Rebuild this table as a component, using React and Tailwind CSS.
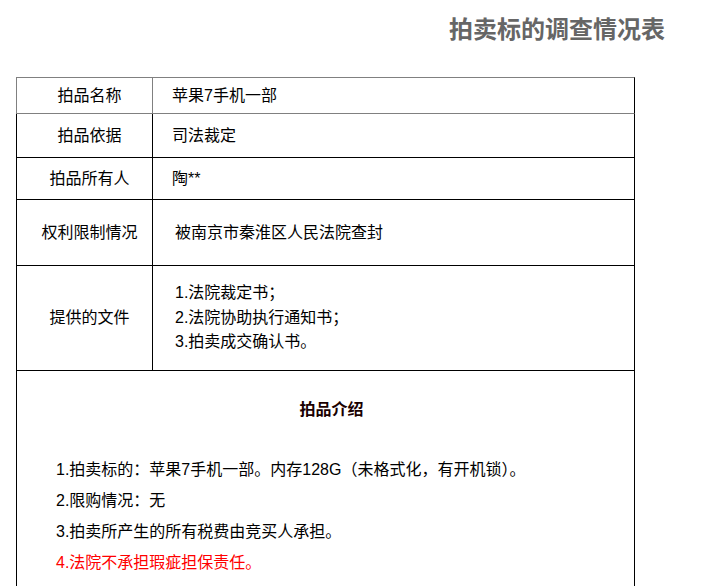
export default function App() {
  const font = { fontFamily: '"Liberation Sans", "Noto Sans CJK SC", sans-serif' };
  return (
    <div className="w-[722px] h-[586px] overflow-hidden bg-white text-black" style={font}>
      <div className="flex justify-end pr-[57px] pt-[14px] h-[77px]">
        <div className="text-[24px] leading-[32px] font-bold text-[#666666]">拍卖标的调查情况表</div>
      </div>
      <div className="ml-[16px] w-[619px] text-[16px]">
        <div className="flex h-[37px] border-t border-l border-b border-r border-[#808080] border-r-black">
          <div className="w-[136px] shrink-0 border-r border-[#808080] flex items-center justify-center pl-[10px]">拍品名称</div>
          <div className="flex items-center pl-[19px]">苹果7手机一部</div>
        </div>
        <div className="flex h-[44px] border-l border-r border-b border-black">
          <div className="w-[136px] shrink-0 border-r border-black flex items-center justify-center pl-[10px]">拍品依据</div>
          <div className="flex items-center pl-[19px]">司法裁定</div>
        </div>
        <div className="flex h-[42px] border-l border-r border-b border-black">
          <div className="w-[136px] shrink-0 border-r border-black flex items-center justify-center pl-[10px]">拍品所有人</div>
          <div className="flex items-center pl-[19px]">陶**</div>
        </div>
        <div className="flex h-[66px] border-l border-r border-b border-black">
          <div className="w-[136px] shrink-0 border-r border-black flex items-center justify-center pl-[10px]">权利限制情况</div>
          <div className="flex items-center pl-[22px]">被南京市秦淮区人民法院查封</div>
        </div>
        <div className="flex h-[105px] border-l border-r border-b border-black">
          <div className="w-[136px] shrink-0 border-r border-black flex items-center justify-center pl-[10px]">提供的文件</div>
          <div className="flex flex-col justify-center pl-[22px] leading-[24.5px]">
            <div>1.法院裁定书；</div>
            <div>2.法院协助执行通知书；</div>
            <div>3.拍卖成交确认书。</div>
          </div>
        </div>
        <div className="h-[220px] border-l border-r border-black">
          <div className="pt-[27px] pl-[12px] text-center font-bold leading-[24px] text-[#1a0000]">拍品介绍</div>
          <div className="pt-[32px] pl-[39px] leading-[31px]">
            <div>1.拍卖标的：苹果7手机一部。内存128G（未格式化，有开机锁）。</div>
            <div>2.限购情况：无</div>
            <div>3.拍卖所产生的所有税费由竞买人承担。</div>
            <div className="text-[#ff0000]">4.法院不承担瑕疵担保责任。</div>
          </div>
        </div>
      </div>
    </div>
  );
}
